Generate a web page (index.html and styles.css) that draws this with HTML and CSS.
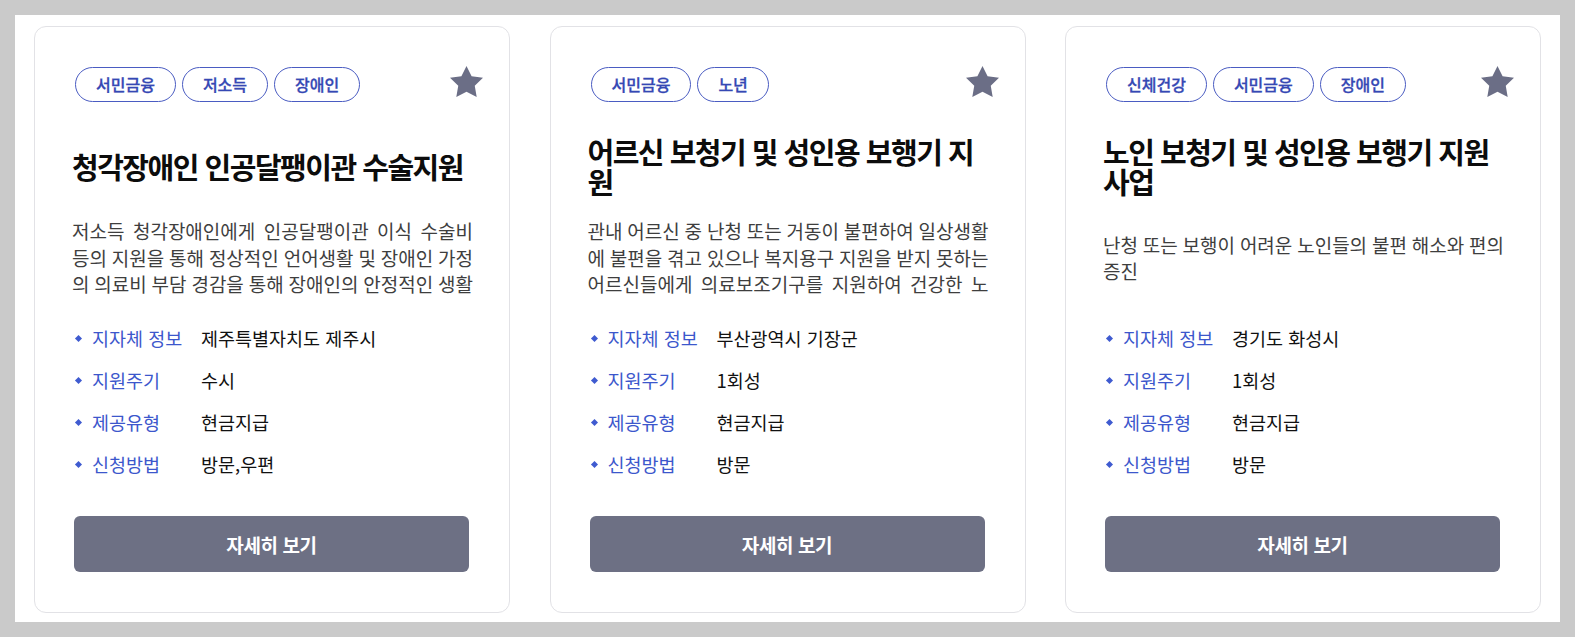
FILE: index.html
```html
<!DOCTYPE html>
<html lang="ko">
<head>
<meta charset="utf-8">
<title>복지 서비스</title>
<link rel="stylesheet" href="styles.css">
</head>
<body>
<main class="panel">
  <div class="cards">
    <article class="card">
      <div class="card-head">
        <ul class="tags">
          <li class="tag">서민금융</li>
          <li class="tag">저소득</li>
          <li class="tag">장애인</li>
        </ul>
        <svg class="star" viewBox="2 2 20 19.02" preserveAspectRatio="none"><path d="M12 2l3.09 6.26L22 9.27l-5 4.87 1.18 6.88L12 17.77l-6.18 3.25L7 14.14 2 9.27l6.91-1.01z"/></svg>
      </div>
      <div class="title-box"><h3 class="title">청각장애인 인공달팽이관 수술지원</h3></div>
      <div class="desc-box"><p class="desc">저소득 청각장애인에게 인공달팽이관 이식 수술비<br>등의 지원을 통해 정상적인 언어생활 및 장애인 가정<br>의 의료비 부담 경감을 통해 장애인의 안정적인 생활</p></div>
      <dl class="info">
        <div class="info-row"><dt>지자체 정보</dt><dd>제주특별자치도 제주시</dd></div>
        <div class="info-row"><dt>지원주기</dt><dd>수시</dd></div>
        <div class="info-row"><dt>제공유형</dt><dd>현금지급</dd></div>
        <div class="info-row"><dt>신청방법</dt><dd>방문,우편</dd></div>
      </dl>
      <button class="detail-btn" type="button">자세히 보기</button>
    </article>

    <article class="card">
      <div class="card-head">
        <ul class="tags">
          <li class="tag">서민금융</li>
          <li class="tag">노년</li>
        </ul>
        <svg class="star" viewBox="2 2 20 19.02" preserveAspectRatio="none"><path d="M12 2l3.09 6.26L22 9.27l-5 4.87 1.18 6.88L12 17.77l-6.18 3.25L7 14.14 2 9.27l6.91-1.01z"/></svg>
      </div>
      <div class="title-box"><h3 class="title">어르신 보청기 및 성인용 보행기 지원</h3></div>
      <div class="desc-box"><p class="desc">관내 어르신 중 난청 또는 거동이 불편하여 일상생활<br>에 불편을 겪고 있으나 복지용구 지원을 받지 못하는<br>어르신들에게 의료보조기구를 지원하여 건강한 노</p></div>
      <dl class="info">
        <div class="info-row"><dt>지자체 정보</dt><dd>부산광역시 기장군</dd></div>
        <div class="info-row"><dt>지원주기</dt><dd>1회성</dd></div>
        <div class="info-row"><dt>제공유형</dt><dd>현금지급</dd></div>
        <div class="info-row"><dt>신청방법</dt><dd>방문</dd></div>
      </dl>
      <button class="detail-btn" type="button">자세히 보기</button>
    </article>

    <article class="card">
      <div class="card-head">
        <ul class="tags">
          <li class="tag">신체건강</li>
          <li class="tag">서민금융</li>
          <li class="tag">장애인</li>
        </ul>
        <svg class="star" viewBox="2 2 20 19.02" preserveAspectRatio="none"><path d="M12 2l3.09 6.26L22 9.27l-5 4.87 1.18 6.88L12 17.77l-6.18 3.25L7 14.14 2 9.27l6.91-1.01z"/></svg>
      </div>
      <div class="title-box"><h3 class="title">노인 보청기 및 성인용 보행기 지원 사업</h3></div>
      <div class="desc-box"><p class="desc">난청 또는 보행이 어려운 노인들의 불편 해소와 편의<br>증진</p></div>
      <dl class="info">
        <div class="info-row"><dt>지자체 정보</dt><dd>경기도 화성시</dd></div>
        <div class="info-row"><dt>지원주기</dt><dd>1회성</dd></div>
        <div class="info-row"><dt>제공유형</dt><dd>현금지급</dd></div>
        <div class="info-row"><dt>신청방법</dt><dd>방문</dd></div>
      </dl>
      <button class="detail-btn" type="button">자세히 보기</button>
    </article>
  </div>
</main>
</body>
</html>
```

FILE: styles.css
```css
* { box-sizing: border-box; }

html, body { height: 100%; }

body {
  margin: 0;
  padding: 15px;
  background: #cacaca;
  font-family: "Noto Sans CJK KR", "Noto Sans", sans-serif;
  color: #111;
}

.panel {
  height: 607px;
  background: #fff;
  padding: 11px 19px 0;
}

.cards {
  display: grid;
  grid-template-columns: repeat(3, 1fr);
  column-gap: 39.5px;
}

.card {
  display: flex;
  flex-direction: column;
  border: 1px solid #e2e2e6;
  border-radius: 12px;
  padding: 40px;
  background: #fff;
}

.card-head {
  display: flex;
  justify-content: space-between;
  align-items: flex-start;
  height: 35px;
}

.tags {
  display: flex;
  gap: 6px;
  list-style: none;
  margin: 0;
  padding: 0;
}

.tag {
  height: 35px;
  border: 1px solid #4a5cc2;
  border-radius: 18px;
  padding: 0 20px;
  font-size: 16px;
  font-weight: 500;
  line-height: 33px;
  color: #3548b4;
  -webkit-text-stroke: 0.3px currentColor;
  white-space: nowrap;
}

.star {
  flex: none;
  width: 33px;
  height: 31px;
  margin: -1px -14px 0 0;
  fill: #6b6e86;
}

.title-box {
  height: 62px;
  margin: 33px -4px 0 -3px;
  display: flex;
  align-items: center;
}

.title {
  margin: 0;
  font-size: 29px;
  font-weight: 700;
  line-height: 30.5px;
  letter-spacing: -1.5px;
  color: #0c0c0c;
}

.desc-box {
  height: 78px;
  margin: 22px -4px 0 -3px;
  display: flex;
  align-items: center;
}

.desc {
  margin: 0;
  width: 100%;
  font-size: 19px;
  line-height: 26.5px;
  word-spacing: -1px;
  color: #3e3e3e;
  text-align: justify;
  text-align-last: justify;
  white-space: nowrap;
}

.info {
  margin: 20px 0 0;
}

.info-row {
  display: flex;
  align-items: center;
  height: 42px;
  font-size: 18.5px;
}

.info-row dt {
  flex: none;
  display: flex;
  align-items: center;
  width: 126px;
  color: #3c57cc;
}

.info-row dt::before {
  content: "";
  width: 5px;
  height: 5px;
  margin: 0 11px 0 1px;
  background: #3f5bd0;
  transform: rotate(45deg);
}

.info-row dd {
  margin: 0;
  color: #111;
}

.detail-btn {
  margin: 31px 0 0 -1px;
  width: 395px;
  height: 56px;
  border: 0;
  border-radius: 6px;
  background: #6d7084;
  color: #fff;
  font-family: "Noto Sans CJK KR", "Noto Sans", sans-serif;
  font-size: 19px;
  font-weight: 700;
  letter-spacing: -0.4px;
}
```
